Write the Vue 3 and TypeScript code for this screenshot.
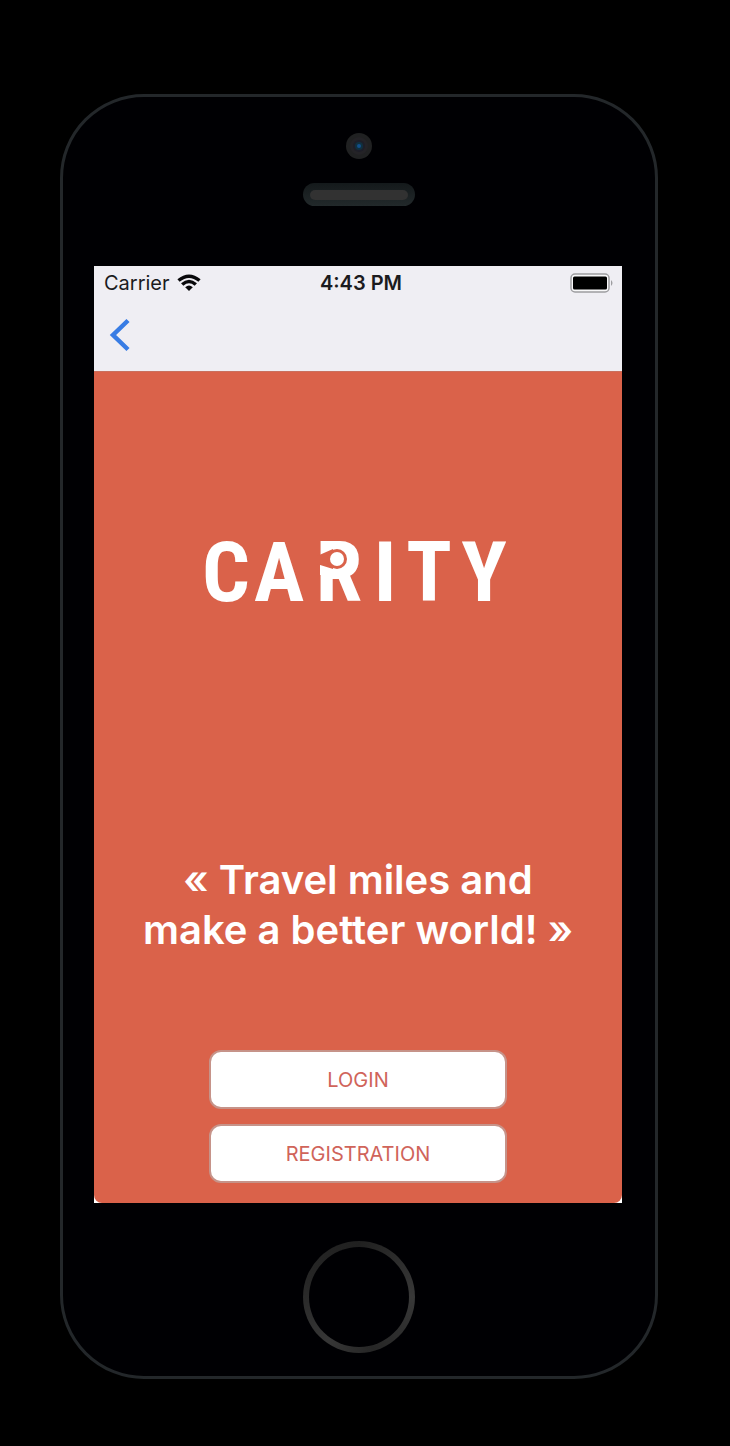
<script setup lang="ts">
interface Letter {
  char: string
  x: number
}

const letters: Letter[] = [
  { char: 'C', x: 18 },
  { char: 'A', x: 71 },
  { char: 'R', x: 131 },
  { char: 'I', x: 177 },
  { char: 'T', x: 221 },
  { char: 'Y', x: 276 },
]

const actions: string[] = ['LOGIN', 'REGISTRATION']
</script>

<template>
  <main class="stage">
    <div class="phone">
      <div class="top">
        <svg class="camera" viewBox="0 0 26 26" aria-hidden="true">
          <circle cx="13" cy="13" r="13" fill="#202122" />
          <circle cx="13" cy="13" r="9" fill="#242327" />
          <circle cx="13" cy="13" r="6" fill="#1e1e28" />
          <circle cx="13" cy="13" r="4" fill="#10303f" />
          <circle cx="13" cy="13" r="2" fill="#12508c" />
        </svg>
        <div class="speaker"><div class="mesh"></div></div>
      </div>

      <div class="screen">
        <header class="header">
          <div class="status">
            <div class="carrier">
              <span>Carrier</span>
              <svg class="wifi" viewBox="0 0 24 18" aria-hidden="true">
                <g fill="none" stroke="#08080a" stroke-width="3.500">
                  <path d="M1.500 6.500Q12-2 22.500 6.500" />
                  <path d="M5.200 10.500Q12 4.500 18.800 10.500" />
                </g>
                <path d="M8.200 13.200Q12 10 15.800 13.200L12 17Z" fill="#08080a" />
              </svg>
            </div>
            <span class="clock">4:43 PM</span>
            <svg class="battery" viewBox="0 0 44 20" aria-label="Battery full">
              <rect x="1" y="1" width="38" height="18" rx="4" fill="#f8f8f9" stroke="#9d9da0" stroke-width="1.500" />
              <rect x="3" y="3.500" width="34" height="13" rx="1.500" fill="#000" />
              <path d="M41 7Q44 10 41 13Z" fill="#9d9da0" />
            </svg>
          </div>
          <button class="back" type="button" aria-label="Back">
            <svg viewBox="0 0 22 34" aria-hidden="true">
              <path d="M19 2.500L4 17L19 31.500" fill="none" stroke="#387ce4" stroke-width="4.500" />
            </svg>
          </button>
        </header>

        <section class="welcome">
          <svg class="logo" viewBox="0 0 300 62" role="img" aria-label="Carity">
            <text v-for="letter in letters" :key="letter.char" :x="letter.x" y="62" text-anchor="middle">{{ letter.char }}</text>
            <circle cx="129" cy="20" r="14" fill="#fff" />
            <path d="M112 22H126V36H112Z" fill="#fff" />
            <path d="M109 17L125 10V30L109 25Z" fill="#da624a" />
            <circle cx="129" cy="20" r="10" fill="#da624a" />
            <circle cx="129" cy="20" r="7" fill="#fff" />
          </svg>
          <h1 class="slogan">« Travel miles and<br />make a better world! »</h1>
          <div class="actions">
            <button v-for="action in actions" :key="action" class="action" type="button">{{ action }}</button>
          </div>
        </section>
      </div>

      <button class="home" type="button" aria-label="Home"></button>
    </div>
  </main>
</template>

<style>
body {
  margin: 0;
  background: #000;
}
</style>

<style scoped>
.stage {
  padding: 94px 72px 67px 60px;
  font-family: Inter, "Liberation Sans", sans-serif;
}

.phone {
  display: flex;
  flex-direction: column;
  align-items: center;
  box-sizing: border-box;
  padding: 36px 31px 23px;
  border: 3px solid #23272a;
  border-radius: 84px;
  background: #000003;
}

.top {
  display: flex;
  flex-direction: column;
  align-items: center;
  gap: 24px;
  padding-bottom: 60px;
}

.camera {
  width: 26px;
  height: 26px;
}

.speaker {
  box-sizing: border-box;
  width: 112px;
  height: 23px;
  padding: 7px;
  border-radius: 12px;
  background: linear-gradient(#14191b, #22292b);
}

.mesh {
  height: 10px;
  border-radius: 5px;
  background: #323232;
}

.screen {
  align-self: stretch;
  margin-right: 2px;
  background: #fff;
}

.header {
  background: #efeef3;
  padding: 3px 8px 18px 10px;
  border-bottom: 1px solid #c9705e;
}

.status {
  display: grid;
  grid-template-columns: 1fr auto 1fr;
  align-items: center;
  height: 28px;
  font-size: 20px;
  line-height: 28px;
  color: #1b1b1e;
}

.carrier {
  display: flex;
  align-items: center;
  gap: 7px;
}

.wifi {
  width: 24px;
  height: 18px;
}

.clock {
  padding-left: 4px;
  font-weight: 600;
}

.battery {
  justify-self: end;
  width: 44px;
  height: 20px;
}

.back {
  display: block;
  margin: 20px 0 0 5px;
  padding: 0;
  border: 0;
  background: none;
}

.back svg {
  display: block;
  width: 22px;
  height: 36px;
}

.welcome {
  display: flex;
  flex-direction: column;
  align-items: center;
  padding: 167px 16px 20px;
  border-radius: 0 0 8px 8px;
  background: #da624a;
}

.logo {
  width: 300px;
  height: 62px;
  overflow: visible;
}

.logo text {
  font-family: "Roboto Condensed", "Liberation Sans Narrow", "Liberation Sans", sans-serif;
  font-size: 84px;
  font-weight: 700;
  fill: #fff;
}

.slogan {
  margin: 254px 0 95px;
  font-size: 40px;
  font-weight: 600;
  line-height: 50px;
  text-align: center;
  color: #fff;
}

.actions {
  display: flex;
  flex-direction: column;
  gap: 15px;
  width: 298px;
  max-width: 100%;
}

.action {
  height: 59px;
  padding: 1px 16px 0;
  border: 2px solid #c69389;
  border-radius: 12px;
  background: #fff;
  font-family: inherit;
  font-size: 20px;
  color: #d0645a;
}

.home {
  width: 112px;
  height: 112px;
  margin-top: 38px;
  padding: 0;
  border: 6px solid transparent;
  border-radius: 50%;
  background:
    linear-gradient(#000003, #000003) padding-box,
    conic-gradient(#202020, #383838 90deg, #262626 165deg, #363636 215deg, #262626 290deg, #202020) border-box;
}
</style>
